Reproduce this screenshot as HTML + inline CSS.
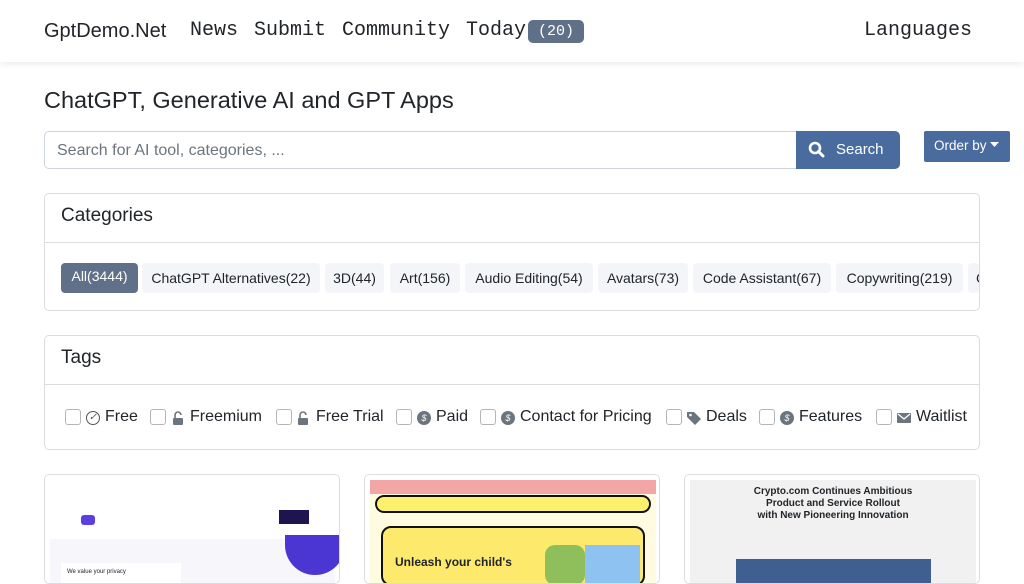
<!DOCTYPE html>
<html><head><meta charset="utf-8"><style>
*{box-sizing:border-box;margin:0;padding:0}
body{width:1024px;height:576px;overflow:hidden;background:#fff;font-family:"Liberation Sans",sans-serif;color:#212529;position:relative}
.nav{position:absolute;left:0;top:0;width:1024px;height:62px;background:#fff;box-shadow:0 2px 6px rgba(0,0,0,.08)}
.mono{font-family:"Liberation Mono",monospace}
.abs{position:absolute;white-space:nowrap}
.badge{background:#607089;color:#fff;border-radius:5px;font-size:15px;padding:3px 10px;}
h1{position:absolute;left:44px;top:87px;font-size:23.5px;font-weight:400;white-space:nowrap}
.search{position:absolute;left:44px;top:131px;width:760px;height:38px;border:1px solid #ced4da;border-radius:5px 0 0 5px;font-size:16px;color:#6c757d;padding:10px 12px}
.sbtn{position:absolute;left:796px;top:131px;width:104px;height:38px;background:#4a6b9e;border-radius:0 5px 5px 0;color:#fff;font-size:15px;padding:10px 0 0 40px}
.obtn{position:absolute;left:924px;top:131px;width:86px;height:31px;background:#4a6b9e;border-radius:2px;color:#fff;font-size:13.5px;padding:7px 0 0 10px;white-space:nowrap}
.card{position:absolute;left:44px;width:936px;border:1px solid #dcdcdc;border-radius:5px;overflow:hidden}
.card .hd{height:49px;border-bottom:1px solid #dcdcdc;padding:11px 16px;font-size:19px}
.pill{position:absolute;top:263px;height:30px;background:#f3f5f8;border-radius:4px;font-size:14px;line-height:30px;text-align:center;white-space:nowrap;overflow:hidden}
.pill.a{background:#607089;color:#fff;line-height:27px}
.cb{position:absolute;top:409px;width:16px;height:16px;border:1px solid #b5b5b5;border-radius:3px}
.tt{position:absolute;top:408px;font-size:16px;white-space:nowrap}
.ic{position:absolute;top:411px;width:14px;height:14px;border-radius:50%;background:#6c757d;color:#fff;font-size:9px;text-align:center;line-height:14px}
.thumb{position:absolute;top:474px;width:296px;height:110px;border:1px solid #dcdcdc;border-radius:5px;overflow:hidden;background:#fff}
</style></head><body>
<div class="nav">
<div class="abs" style="left:44px;top:20px;font-size:20px">GptDemo.Net</div>
<div class="abs mono" style="left:190px;top:19px;font-size:20px">News</div>
<div class="abs mono" style="left:254px;top:19px;font-size:20px">Submit</div>
<div class="abs mono" style="left:342px;top:19px;font-size:20px">Community</div>
<div class="abs mono" style="left:466px;top:19px;font-size:20px">Today</div>
<div class="abs mono badge" style="left:528px;top:20px">(20)</div>
<div class="abs mono" style="left:864px;top:19px;font-size:20px">Languages</div>
</div>
<h1>ChatGPT, Generative AI and GPT Apps</h1>
<div class="search">Search for AI tool, categories, ...</div>
<div class="sbtn"><svg style="position:absolute;left:12px;top:10px" width="17" height="17" viewBox="0 0 17 17"><circle cx="7" cy="7" r="5" fill="none" stroke="#fff" stroke-width="2.6"/><line x1="10.5" y1="10.5" x2="15" y2="15" stroke="#fff" stroke-width="3" stroke-linecap="round"/></svg>Search</div>
<div class="obtn">Order by <svg width="9" height="6" viewBox="0 0 9 6" style="vertical-align:2px"><path d="M0 0h9L4.5 5z" fill="#fff"/></svg></div>
<div class="card" style="top:193px;height:118px"><div class="hd">Categories</div></div>
<div class="pill a" style="left:61px;width:77px">All(3444)</div>
<div class="pill" style="left:142px;width:178px">ChatGPT Alternatives(22)</div>
<div class="pill" style="left:325px;width:59px">3D(44)</div>
<div class="pill" style="left:390px;width:70px">Art(156)</div>
<div class="pill" style="left:465px;width:128px">Audio Editing(54)</div>
<div class="pill" style="left:598px;width:90px">Avatars(73)</div>
<div class="pill" style="left:693px;width:138px">Code Assistant(67)</div>
<div class="pill" style="left:836px;width:127px">Copywriting(219)</div>
<div class="pill" style="left:968px;width:11px;text-align:left;padding-left:8px">C</div>
<div class="card" style="top:335px;height:115px"><div class="hd">Tags</div></div>
<i class="cb" style="left:65px"></i><i class="ic" style="left:86px;background:#fff;border:1px solid #555;color:#555;font-size:10px;line-height:12px">✓</i><span class="tt" style="left:105px">Free</span>
<i class="cb" style="left:150px"></i><svg class="abs" style="left:172px;top:411px" width="12" height="14" viewBox="0 0 12 14"><path d="M3 7V4a3 3 0 0 1 6 0" fill="none" stroke="#6c757d" stroke-width="1.6"/><rect x="1" y="7" width="10" height="7" rx="1" fill="#6c757d"/></svg><span class="tt" style="left:190px">Freemium</span>
<i class="cb" style="left:276px"></i><svg class="abs" style="left:297px;top:411px" width="12" height="14" viewBox="0 0 12 14"><path d="M3 7V4a3 3 0 0 1 6 0" fill="none" stroke="#6c757d" stroke-width="1.6"/><rect x="1" y="7" width="10" height="7" rx="1" fill="#6c757d"/></svg><span class="tt" style="left:316px">Free Trial</span>
<i class="cb" style="left:396px"></i><i class="ic" style="left:417px">$</i><span class="tt" style="left:436px">Paid</span>
<i class="cb" style="left:480px"></i><i class="ic" style="left:501px">$</i><span class="tt" style="left:520px">Contact for Pricing</span>
<i class="cb" style="left:666px"></i><svg class="abs" style="left:686px;top:410px" width="16" height="16" viewBox="0 0 16 16"><path d="M1 2h7l7 7-6 6-8-8z" fill="#6c757d"/><circle cx="4.5" cy="5" r="1.3" fill="#fff"/></svg><span class="tt" style="left:706px">Deals</span>
<i class="cb" style="left:759px"></i><i class="ic" style="left:780px">$</i><span class="tt" style="left:799px">Features</span>
<i class="cb" style="left:876px"></i><svg class="abs" style="left:897px;top:412px" width="14" height="12" viewBox="0 0 14 12"><rect x="0" y="1" width="14" height="10" rx="1" fill="#6c757d"/><path d="M1 2l6 5 6-5" fill="none" stroke="#fff" stroke-width="1.3"/></svg><span class="tt" style="left:916px">Waitlist</span>
<div class="thumb" style="left:44px">
<div style="position:absolute;left:36px;top:40px;width:14px;height:10px;background:#5b3fe0;border-radius:3px"></div>
<div style="position:absolute;left:234px;top:35px;width:30px;height:14px;background:#1e1450"></div>
<div style="position:absolute;left:5px;top:64px;width:285px;height:50px;background:#f6f6fb"></div>
<div style="position:absolute;left:240px;top:60px;width:60px;height:40px;border-radius:0 0 30px 30px;background:#4b36d4"></div>
<div style="position:absolute;left:16px;top:88px;width:120px;height:20px;background:#fff;font-size:6px;padding:6px">We value your privacy</div>
</div>
<div class="thumb" style="left:364px">
<div style="position:absolute;left:5px;top:5px;width:286px;height:14px;background:#f3a6a6"></div>
<div style="position:absolute;left:5px;top:19px;width:286px;height:95px;background:#fefbe0"></div>
<div style="position:absolute;left:10px;top:20px;width:276px;height:18px;border:2px solid #111;border-radius:9px;background:#fdf06d"></div>
<div style="position:absolute;left:16px;top:51px;width:264px;height:60px;border:2px solid #111;border-radius:10px;background:#fde96c"></div>
<div style="position:absolute;left:30px;top:80px;font-size:12px;font-weight:bold">Unleash your child's</div>
<div style="position:absolute;left:180px;top:70px;width:40px;height:40px;background:#8fbf5a;border-radius:10px"></div>
<div style="position:absolute;left:220px;top:70px;width:55px;height:40px;background:#8ec2f0"></div>
</div>
<div class="thumb" style="left:684px">
<div style="position:absolute;left:5px;top:5px;width:286px;height:110px;background:#f1f1f1"></div>
<div style="position:absolute;left:5px;top:11px;width:286px;text-align:center;font-size:10px;font-weight:bold;line-height:12px">Crypto.com Continues Ambitious<br>Product and Service Rollout<br>with New Pioneering Innovation</div>
<div style="position:absolute;left:51px;top:84px;width:195px;height:30px;background:#3e5f8f"></div>
</div>
</body></html>
